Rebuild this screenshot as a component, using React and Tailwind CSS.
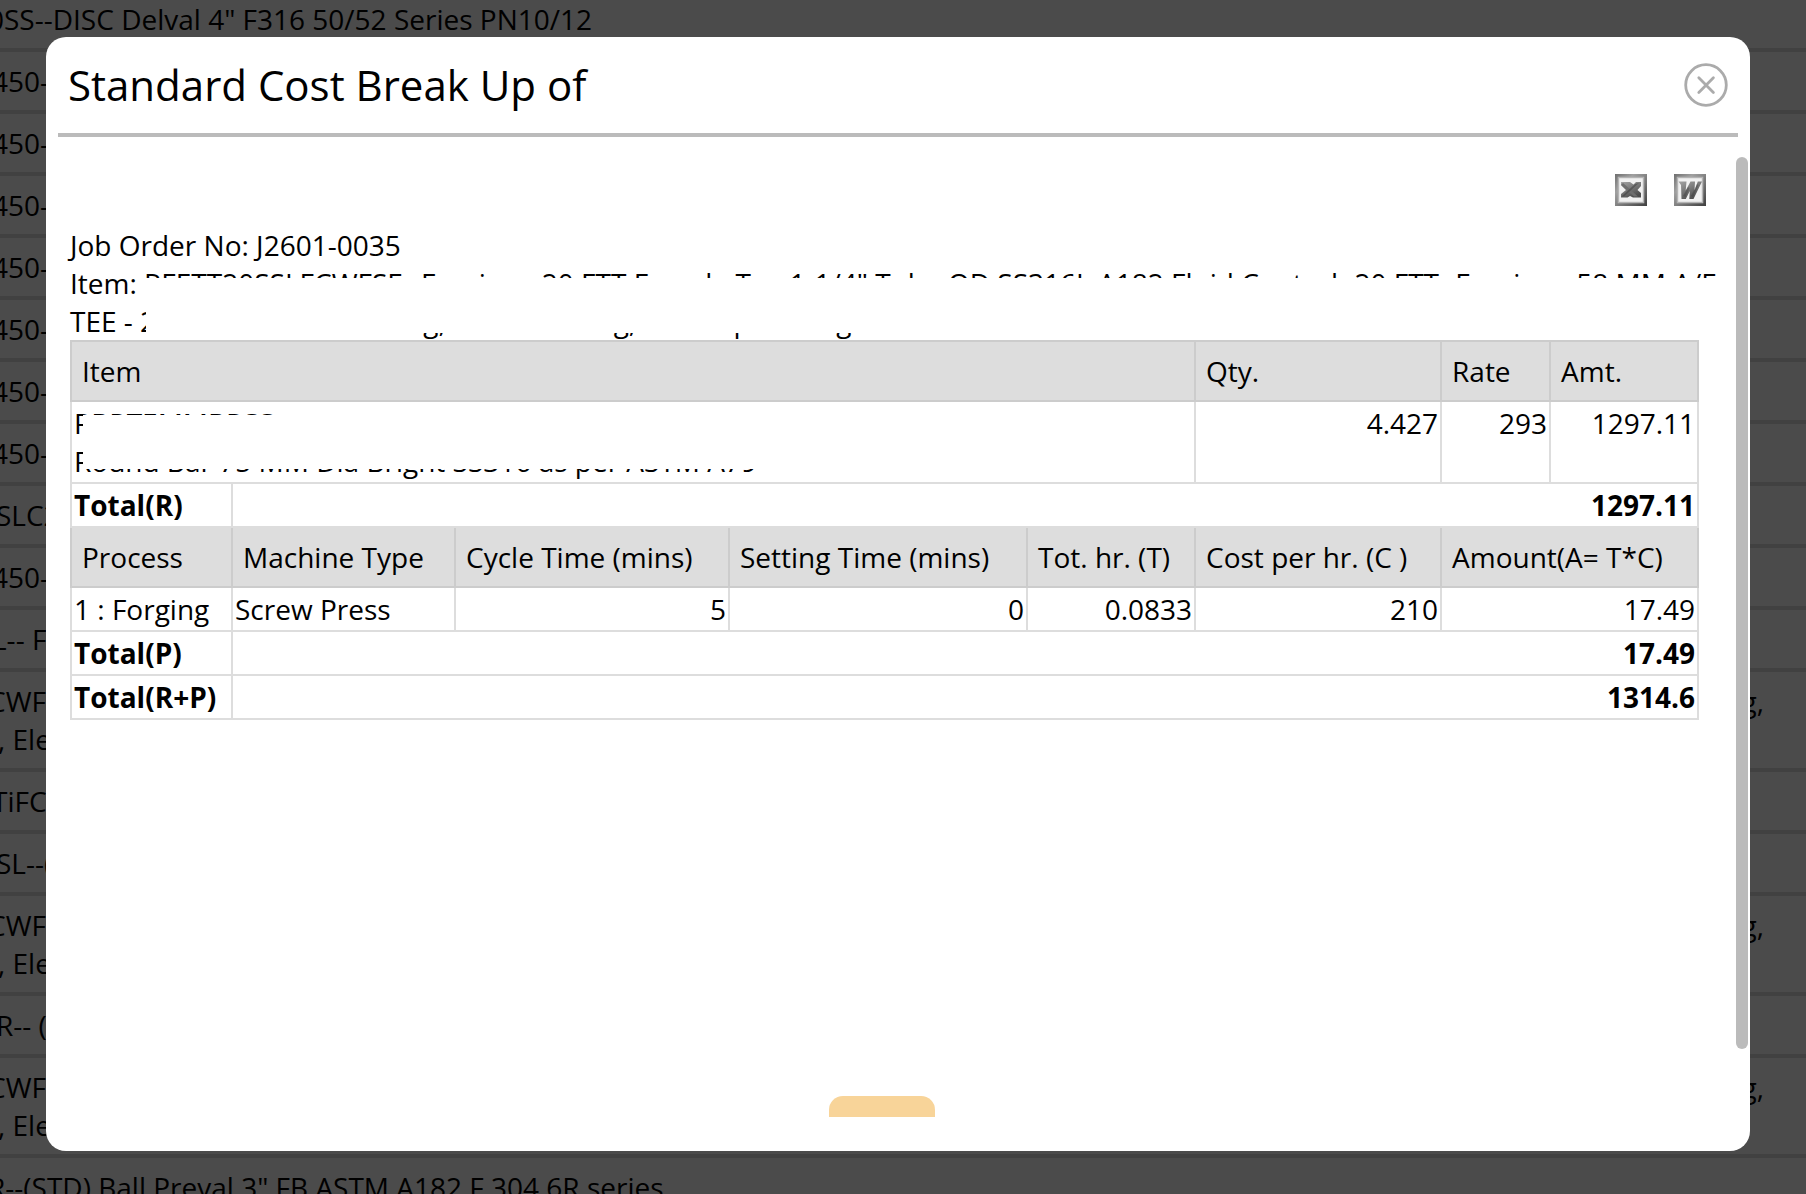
const backgroundRows = [
  { indent: "-ml-3", lines: ['0SS--DISC Delval 4" F316 50/52 Series PN10/12'] },
  { indent: "-ml-2", lines: ["450-"] },
  { indent: "-ml-2", lines: ["450-"] },
  { indent: "-ml-2", lines: ["450-"] },
  { indent: "-ml-2", lines: ["450-"] },
  { indent: "-ml-2", lines: ["450-"] },
  { indent: "-ml-2", lines: ["450-"] },
  { indent: "-ml-2", lines: ["450-"] },
  { indent: "-ml-1", lines: ["SLC2"] },
  { indent: "-ml-2", lines: ["450-"] },
  { indent: "-ml-2", lines: ["L-- F"] },
  { indent: "-ml-3", lines: ["CWF", ", Ele"], tail: "g," },
  { indent: "-ml-2", lines: ["TiFC"] },
  { indent: "-ml-1", lines: ["SL--("] },
  { indent: "-ml-3", lines: ["CWF", ", Ele"], tail: "g," },
  { indent: "-ml-1", lines: ["R-- ("] },
  { indent: "-ml-3", lines: ["CWF", ", Ele"], tail: "g," },
  { indent: "-ml-3", lines: ['R--(STD) Ball Preval 3" FB ASTM A182 F 304 6R series'] },
];

function BackgroundList() {
  return (
    <ul aria-hidden="true" className="absolute inset-x-0 -top-2.5 whitespace-nowrap">
      {backgroundRows.map((row, i) => (
        <li key={i} className="border-b-4 border-[#414141] py-2.5">
          <div className="flex justify-between pr-[42px]">
            <span className={row.indent}>{row.lines[0]}</span>
            {row.tail && <span>{row.tail}</span>}
          </div>
          {row.lines[1] && <div className="-ml-0.5">{row.lines[1]}</div>}
        </li>
      ))}
    </ul>
  );
}

function CloseIcon() {
  return (
    <svg viewBox="0 0 44 44" className="size-11" fill="none" stroke="#ababab" strokeLinecap="round">
      <circle cx="22" cy="22" r="20.3" strokeWidth="2.8" />
      <path d="M14.8 14.8l14.6 14.6M29.4 14.8L14.8 29.4" strokeWidth="2.8" />
    </svg>
  );
}

function FileIcon({ id, children }) {
  return (
    <svg viewBox="0 0 32 32" className="size-8">
      <defs>
        <linearGradient id={id + "-frame"} x1="0" y1="0" x2="1" y2="1">
          <stop offset="0" stopColor="#6f6f6f" />
          <stop offset="0.3" stopColor="#a0a0a0" />
          <stop offset="1" stopColor="#3f3f3f" />
        </linearGradient>
        <linearGradient id={id + "-glyph"} x1="0" y1="0" x2="0.6" y2="1">
          <stop offset="0" stopColor="#a4a4a4" />
          <stop offset="1" stopColor="#4d4d4d" />
        </linearGradient>
      </defs>
      <rect width="32" height="32" fill={"url(#" + id + "-frame)"} />
      <rect x="2.7" y="2.7" width="26.6" height="26.6" fill="#b4b4b4" />
      <rect x="4.2" y="4.2" width="23.600" height="23.600" fill="#f1f1f1" />
      <g fill={"url(#" + id + "-glyph)"}>{children}</g>
    </svg>
  );
}

function ExcelIcon() {
  return (
    <FileIcon id="excel">
      <path d="M6 8h9l3.500 2.500L21 8h5v4l-3.500 4 3.500 3v4.500h-8L15 22l-2.500 1.500H6V20l5-4-5-5z" />
      <path d="M8 9l15 13.500h-4L6 11z" fill="#6e6e6e" />
      <path d="M24 9L9 22.500H6.500L20 10z" fill="#3c3c3c" opacity="0.5" />
    </FileIcon>
  );
}

function WordIcon() {
  return (
    <FileIcon id="word">
      <path d="M4.500 7.500h8l-.8 9 4.800-9h4.500l-.5 9 3.300-9H28L19.500 25h-4.200l.5-8-4 8H7.500L7 11z" />
      <path d="M9 22l5-9 1.500 1-4 9zM17 22l6-12 1.500 1-5.500 12z" fill="#2f2f2f" opacity="0.3" />
    </FileIcon>
  );
}

const th = "border-2 border-[#ccc] bg-[#ddd] p-2.5 text-left font-normal";
const td = "border-2 border-[#ddd] p-0.5 align-top";
const num = td + " text-right";

function TotalRow({ label, value }) {
  return (
    <tr className="font-bold">
      <td className={td}>{label}</td>
      <td className={num} colSpan={7}>{value}</td>
    </tr>
  );
}

function CostTable() {
  return (
    <table className="w-full table-fixed border-collapse whitespace-nowrap">
      <colgroup>
        <col className="w-[161px]" />
        <col className="w-[223px]" />
        <col className="w-[274px]" />
        <col className="w-[298px]" />
        <col className="w-[168px]" />
        <col className="w-[246px]" />
        <col className="w-[109px]" />
        <col className="w-[148px]" />
      </colgroup>
      <tbody>
        <tr>
          <th className={th} colSpan={5}>Item</th>
          <th className={th}>Qty.</th>
          <th className={th}>Rate</th>
          <th className={th}>Amt.</th>
        </tr>
        <tr>
          <td className={td} colSpan={5}>
            <div className="relative">
              RBRTEMMBRSS
              <br />
              Round Bar 75 MM Dia Bright SS316 as per ASTM A79
              <div className="absolute top-[11px] right-4 left-[9px] h-[54px] bg-white" />
            </div>
          </td>
          <td className={num}>4.427</td>
          <td className={num}>293</td>
          <td className={num}>1297.11</td>
        </tr>
        <TotalRow label="Total(R)" value="1297.11" />
        <tr>
          <th className={th}>Process</th>
          <th className={th}>Machine Type</th>
          <th className={th}>Cycle Time (mins)</th>
          <th className={th}>Setting Time (mins)</th>
          <th className={th}>Tot. hr. (T)</th>
          <th className={th}>Cost per hr. (C )</th>
          <th className={th} colSpan={2}>Amount(A= T*C)</th>
        </tr>
        <tr>
          <td className={td}>1 : Forging</td>
          <td className={td}>Screw Press</td>
          <td className={num}>5</td>
          <td className={num}>0</td>
          <td className={num}>0.0833</td>
          <td className={num}>210</td>
          <td className={num} colSpan={2}>17.49</td>
        </tr>
        <TotalRow label="Total(P)" value="17.49" />
        <TotalRow label="Total(R+P)" value="1314.6" />
      </tbody>
    </table>
  );
}

export default function App() {
  return (
    <div className="relative flex h-screen overflow-hidden bg-[#4b4b4b] font-['Open_Sans',sans-serif] text-[28px] leading-[38px] text-black">
      <BackgroundList />
      <section
        role="dialog"
        aria-labelledby="dialog-title"
        className="relative mt-[37px] mr-14 mb-[43px] ml-[46px] flex min-w-0 flex-1 flex-col rounded-[20px] bg-white"
      >
        <header className="mx-3 flex h-[100px] shrink-0 items-center justify-between border-b-4 border-[#bbb] px-2.5">
          <h1 id="dialog-title" className="text-[42px] leading-[56px]">Standard Cost Break Up of</h1>
          <button type="button" aria-label="Close">
            <CloseIcon />
          </button>
        </header>
        <div className="mb-[34px] flex min-h-0 flex-1 overflow-hidden pr-0.5 pl-6">
          <div className="flex min-w-0 flex-1 flex-col">
            <div className="mt-[37px] flex justify-end gap-[27px] pr-[30px]">
              <button type="button" aria-label="Export to Excel">
                <ExcelIcon />
              </button>
              <button type="button" aria-label="Export to Word">
                <WordIcon />
              </button>
            </div>
            <div className="relative mt-5 whitespace-nowrap">
              <p>Job Order No: J2601-0035</p>
              <p>Item: RFETT20SSLFCWFSE--Forging - 20 FTT Female Tee 1-1/4" Tube OD SS316L A182 Fluid Control- 20 FTT- Forging - 58 MM A/F</p>
              <p>TEE - 20 FTT Mirror Finishing, Sand Blasting, Electropolishing</p>
              <div className="absolute top-[52px] right-0 left-[76px] h-[55px] bg-white" />
            </div>
            <div className="pr-[37px]">
              <CostTable />
            </div>
            <button type="button" aria-label="Continue" className="mt-[376px] mr-[43px] h-[42px] w-[106px] shrink-0 self-center rounded-[14px] bg-[#f8d499]" />
          </div>
          <div className="mt-5 mb-[68px] w-3 shrink-0 rounded-full bg-[#bbb]" />
        </div>
      </section>
    </div>
  );
}
